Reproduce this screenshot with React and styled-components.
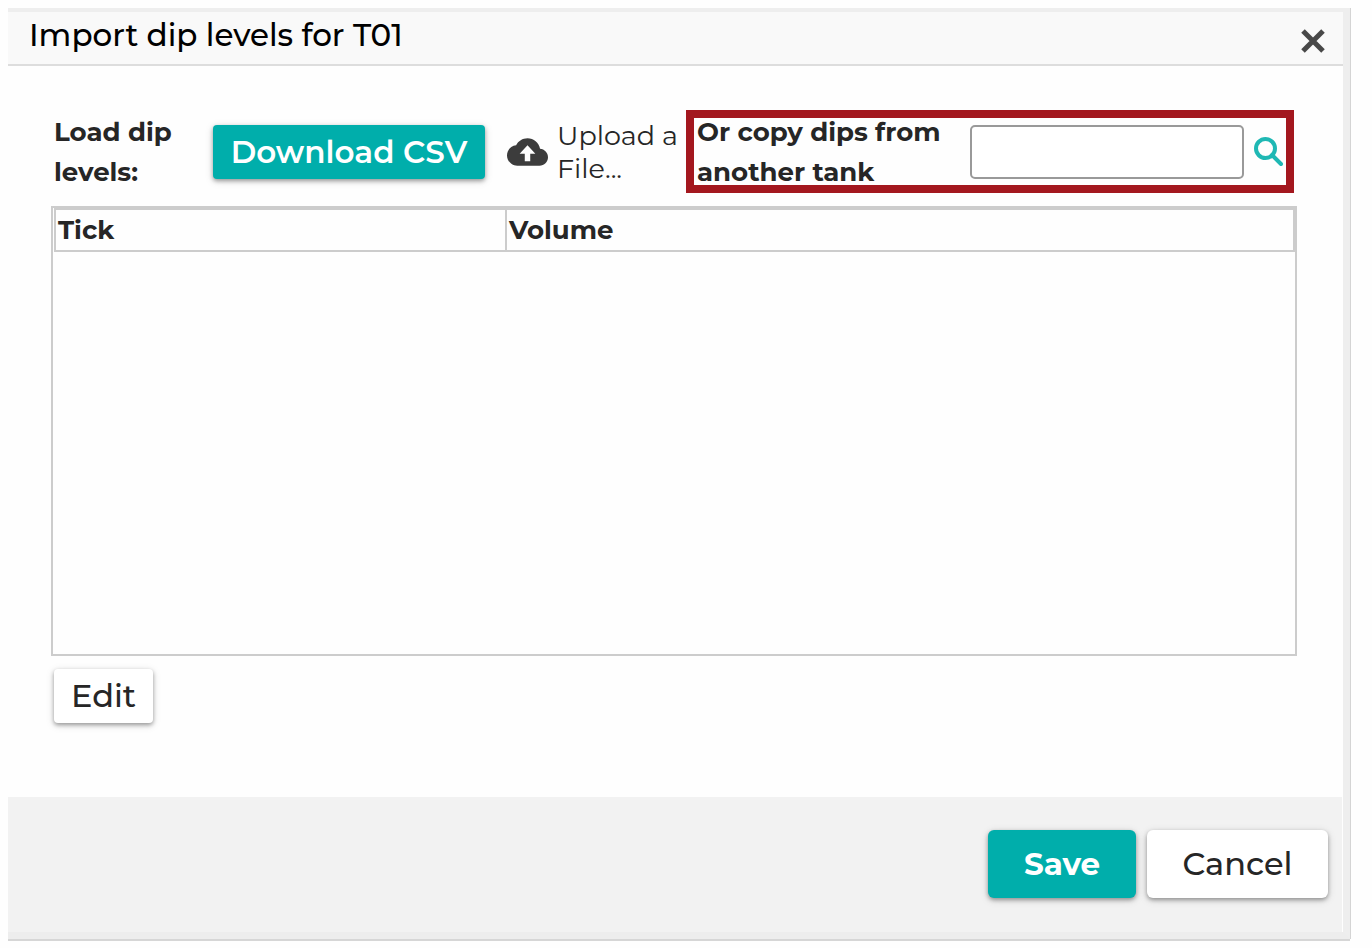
import React, { useState } from 'react'
import styled, { createGlobalStyle } from 'styled-components'

const colors = {
    teal: '#00aeab',
    text: '#262626',
    line: '#cccccc',
    red: '#a3171e',
}

const GlobalStyle = createGlobalStyle`
  * { box-sizing: border-box; }
  body {
    margin: 0;
    background: #fefefe;
    color: ${colors.text};
    font-family: Montserrat, Inter, sans-serif;
  }
  button, input { font-family: inherit; color: inherit; }
`;

const Page = styled.div`
  padding: 8px 22px 8px 8px;
`;
const Dialog = styled.section`
  border-top: 4px solid #eeeeee;
  border-right: 7px solid #eeeeee;
  border-bottom: 7px solid #ededed;
  box-shadow: 1px 0 0 #d4d4d4, 0 2px 0 #d6d6d6;
  background: #fefefe;
`;
const Header = styled.header`
  display: flex;
  align-items: center;
  justify-content: space-between;
  height: 54px;
  padding: 0 18px 0 21px;
  background: #f9f9f9;
  border-bottom: 2px solid #dddddd;
`;
const Title = styled.h1`
  margin: 0;
  padding-bottom: 6px;
  font-size: 31px;
  line-height: 40px;
  font-weight: 500;
  color: #000;
`;
const IconButton = styled.button`
  display: flex;
  padding: 0;
  border: 0;
  background: none;
  cursor: pointer;
`;
const CloseButton = styled(IconButton)`
  padding-top: 6px;
`;
const Body = styled.div`
  padding: 44px 46px 74px 43px;
`;
const Toolbar = styled.div`
  display: flex;
  align-items: center;
  padding: 0 3px;
  margin-bottom: 13px;
`;
const Caption = styled.div`
  width: 159px;
  padding-right: 32px;
  font-size: 26px;
  line-height: 40px;
  font-weight: 700;
`;
const Button = styled.button`
  height: ${p => p.$large ? 68 : 54}px;
  width: ${p => p.$width}px;
  padding: 0;
  border: 0;
  border-radius: ${p => p.$large ? 6 : 4}px;
  font-size: ${p => p.$primary ? 31 : 32}px;
  line-height: 40px;
  font-weight: ${p => p.$bold ? 700 : p.$primary ? 600 : 500};
  color: ${p => p.$primary ? '#fff' : colors.text};
  background: ${p => p.$primary ? colors.teal : '#fff'};
  box-shadow: 0 2px 4px rgba(0, 0, 0, 0.35), 0 2px 10px rgba(0, 0, 0, 0.12);
  white-space: nowrap;
  cursor: pointer;
`;
const Upload = styled.label`
  display: flex;
  align-items: center;
  gap: 9px;
  width: 201px;
  padding-left: 22px;
  font-size: 27px;
  line-height: 33px;
  font-weight: 400;
  cursor: pointer;
  svg { flex: none; }
`;
const FileInput = styled.input`
  position: absolute;
  width: 1px;
  height: 1px;
  opacity: 0;
`;
const CopyBox = styled.div`
  display: flex;
  align-items: center;
  flex: 1;
  gap: 10px;
  height: 83px;
  padding: 0 10px 0 11px;
  outline: 8px solid ${colors.red};
  outline-offset: -8px;
`;
const CopyLabel = styled.label`
  flex: 1;
  font-size: 26px;
  line-height: 40px;
  font-weight: 700;
`;
const TextInput = styled.input`
  width: 274px;
  height: 54px;
  padding: 0 10px;
  border: 2px solid #999999;
  border-radius: 5px;
  background: #fff;
  font-size: 26px;
`;
const TableBox = styled.div`
  height: 450px;
  padding: 0 0 0 1px;
  border: 2px solid ${colors.line};
`;
const Table = styled.table`
  width: 100%;
  border-collapse: collapse;
  table-layout: fixed;
`;
const Th = styled.th`
  width: ${p => p.$width || 'auto'};
  padding: 0 2px;
  border: 2px solid ${colors.line};
  text-align: left;
  font-size: 26px;
  line-height: 40px;
  font-weight: 700;
`;
const EditRow = styled.div`
  padding: 13px 3px 0;
`;
const Footer = styled.footer`
  display: flex;
  justify-content: flex-end;
  gap: 11px;
  margin-right: 1px;
  padding: 33px 14px 34px;
  background: #f2f2f2;
`;

const CloseIcon = () => (
    <svg width="24" height="24" viewBox="0 0 24 24" fill="none" stroke="#484848" strokeWidth="5">
        <path d="M2 2L22 22M22 2L2 22" />
    </svg>
)

const CloudIcon = () => (
    <svg width="41" height="28" viewBox="0 4 24 16" fill="#3c3c3c">
        <path d="M19.35 10.04C18.67 6.59 15.64 4 12 4 9.11 4 6.6 5.64 5.35 8.04 2.34 8.36 0 10.91 0 14c0 3.31 2.69 6 6 6h13c2.76 0 5-2.24 5-5 0-2.64-2.05-4.78-4.65-4.96zM13.6 13v4.4h-3.2V13H7.4l4.6-5 4.6 5h-3z" />
    </svg>
)

const SearchIcon = () => (
    <svg width="30" height="32" viewBox="0 0 30 32" fill="none" stroke="#1fb8b4">
        <circle cx="11.5" cy="12.5" r="9.5" strokeWidth="4" />
        <path d="M18 19L27 28" strokeWidth="4" strokeLinecap="round" />
    </svg>
)

export default function App() {
    const [tank, setTank] = useState('')

    return (
        <Page>
            <GlobalStyle />
            <Dialog role="dialog" aria-labelledby="title">
                <Header>
                    <Title id="title">Import dip levels for T01</Title>
                    <CloseButton type="button" aria-label="Close"><CloseIcon /></CloseButton>
                </Header>
                <Body>
                    <Toolbar>
                        <Caption>Load dip levels:</Caption>
                        <Button type="button" $primary $width={272}>Download CSV</Button>
                        <Upload>
                            <CloudIcon />
                            <span>Upload a File...</span>
                            <FileInput type="file" />
                        </Upload>
                        <CopyBox>
                            <CopyLabel htmlFor="tank">Or copy dips from another tank</CopyLabel>
                            <TextInput id="tank" type="text" value={tank} onChange={e => setTank(e.target.value)} />
                            <IconButton type="button" aria-label="Search"><SearchIcon /></IconButton>
                        </CopyBox>
                    </Toolbar>
                    <TableBox>
                        <Table>
                            <thead>
                                <tr>
                                    <Th $width="451px">Tick</Th>
                                    <Th>Volume</Th>
                                </tr>
                            </thead>
                        </Table>
                    </TableBox>
                    <EditRow>
                        <Button type="button" $width={99}>Edit</Button>
                    </EditRow>
                </Body>
                <Footer>
                    <Button type="button" $large $primary $bold $width={148}>Save</Button>
                    <Button type="button" $large $width={181}>Cancel</Button>
                </Footer>
            </Dialog>
        </Page>
    )
}
